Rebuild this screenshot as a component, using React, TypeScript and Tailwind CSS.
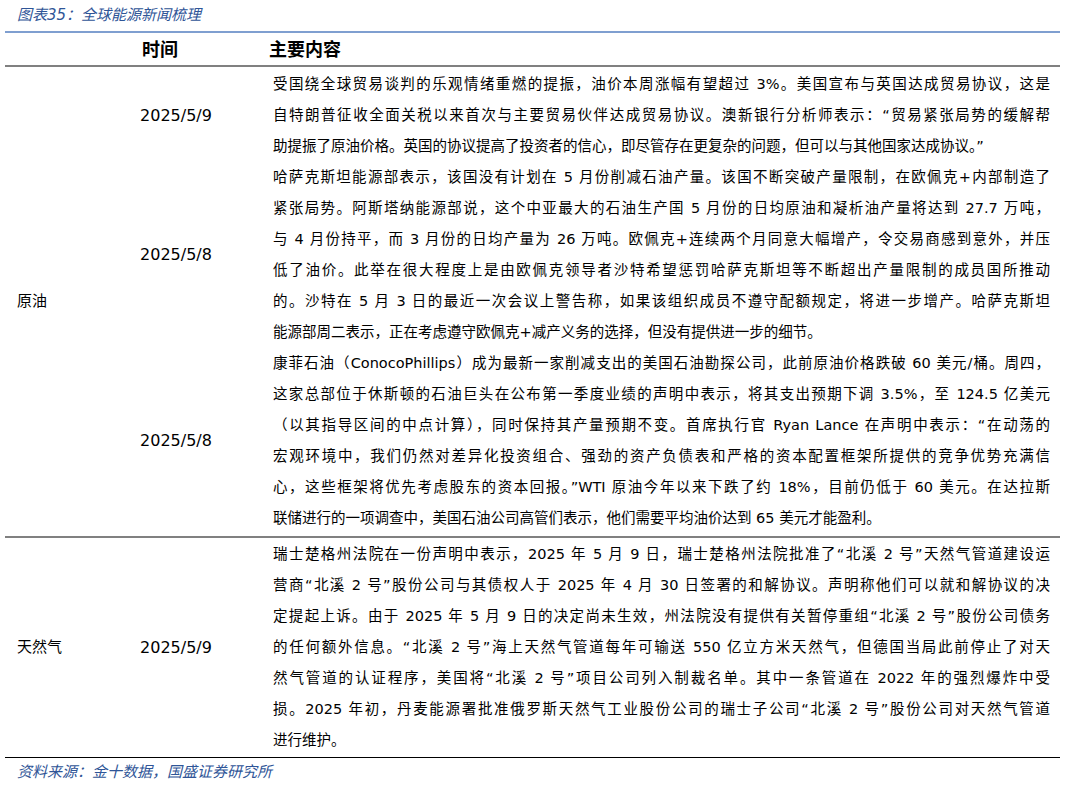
import React from "react";

const FONT = { fontFamily: '"DejaVu Sans", "Noto Sans CJK SC", sans-serif' };

const rows: { cat?: string; date: string; lines: string[] }[][] = [
  [
    {
      cat: "原油",
      date: "2025/5/9",
      lines: [
        "受国绕全球贸易谈判的乐观情绪重燃的提振，油价本周涨幅有望超过 3%。美国宣布与英国达成贸易协议，这是",
        "自特朗普征收全面关税以来首次与主要贸易伙伴达成贸易协议。澳新银行分析师表示：“贸易紧张局势的缓解帮",
        "助提振了原油价格。英国的协议提高了投资者的信心，即尽管存在更复杂的问题，但可以与其他国家达成协议。”",
      ],
    },
    {
      date: "2025/5/8",
      lines: [
        "哈萨克斯坦能源部表示，该国没有计划在 5 月份削减石油产量。该国不断突破产量限制，在欧佩克+内部制造了",
        "紧张局势。阿斯塔纳能源部说，这个中亚最大的石油生产国 5 月份的日均原油和凝析油产量将达到 27.7 万吨，",
        "与 4 月份持平，而 3 月份的日均产量为 26 万吨。欧佩克+连续两个月同意大幅增产，令交易商感到意外，并压",
        "低了油价。此举在很大程度上是由欧佩克领导者沙特希望惩罚哈萨克斯坦等不断超出产量限制的成员国所推动",
        "的。沙特在 5 月 3 日的最近一次会议上警告称，如果该组织成员不遵守配额规定，将进一步增产。哈萨克斯坦",
        "能源部周二表示，正在考虑遵守欧佩克+减产义务的选择，但没有提供进一步的细节。",
      ],
    },
    {
      date: "2025/5/8",
      lines: [
        "康菲石油（ConocoPhillips）成为最新一家削减支出的美国石油勘探公司，此前原油价格跌破 60 美元/桶。周四，",
        "这家总部位于休斯顿的石油巨头在公布第一季度业绩的声明中表示，将其支出预期下调 3.5%，至 124.5 亿美元",
        "（以其指导区间的中点计算），同时保持其产量预期不变。首席执行官 Ryan Lance 在声明中表示：“在动荡的",
        "宏观环境中，我们仍然对差异化投资组合、强劲的资产负债表和严格的资本配置框架所提供的竞争优势充满信",
        "心，这些框架将优先考虑股东的资本回报。”WTI 原油今年以来下跌了约 18%，目前仍低于 60 美元。在达拉斯",
        "联储进行的一项调查中，美国石油公司高管们表示，他们需要平均油价达到 65 美元才能盈利。",
      ],
    },
  ],
  [
    {
      cat: "天然气",
      date: "2025/5/9",
      lines: [
        "瑞士楚格州法院在一份声明中表示，2025 年 5 月 9 日，瑞士楚格州法院批准了“北溪 2 号”天然气管道建设运",
        "营商“北溪 2 号”股份公司与其债权人于 2025 年 4 月 30 日签署的和解协议。声明称他们可以就和解协议的决",
        "定提起上诉。由于 2025 年 5 月 9 日的决定尚未生效，州法院没有提供有关暂停重组“北溪 2 号”股份公司债务",
        "的任何额外信息。“北溪 2 号”海上天然气管道每年可输送 550 亿立方米天然气，但德国当局此前停止了对天",
        "然气管道的认证程序，美国将“北溪 2 号”项目公司列入制裁名单。其中一条管道在 2022 年的强烈爆炸中受",
        "损。2025 年初，丹麦能源署批准俄罗斯天然气工业股份公司的瑞士子公司“北溪 2 号”股份公司对天然气管道",
        "进行维护。",
      ],
    },
  ],
];

function Section({ items }: { items: (typeof rows)[number] }) {
  const cat = items[0].cat;
  return (
    <div className="flex">
      <div className="w-[120px] pl-3 flex items-center text-[15px] text-black">{cat}</div>
      <div className="flex-1 flex flex-col">
        {items.map((it, i) => (
          <div key={i} className="flex">
            <div className="w-[102px] flex items-center justify-center text-[16px]">{it.date}</div>
            <div className="flex-1 pl-[46px] pr-[10px]">
              {it.lines.map((l, j) => (
                <div
                  key={j}
                  className={
                    "h-[31px] leading-[31px] text-[14.5px] text-justify " +
                    (j < it.lines.length - 1 ? "[text-align-last:justify]" : "")
                  }
                >
                  {l}
                </div>
              ))}
            </div>
          </div>
        ))}
      </div>
    </div>
  );
}

export default function App() {
  return (
    <div className="w-[1065px] h-[789px] bg-white text-black" style={FONT}>
      <div className="px-[5px]">
        <div className="h-[31px] pl-3 flex items-center italic text-[15px] text-[#2f5597]">图表35：全球能源新闻梳理</div>
        <div className="border-t-2 border-[#7f9fd0] border-b-2 border-b-[#808080] h-[36px] flex items-center font-bold text-[18px]">
          <div className="w-[120px]" />
          <div className="w-[102px] pl-[17px]">时间</div>
          <div className="pl-[42px]">主要内容</div>
        </div>
        <div className="pt-[2px] pb-[2px] border-b-2 border-[#808080]">
          <Section items={rows[0]} />
        </div>
        <div className="pt-[1px] pb-[1px] border-b border-black">
          <Section items={rows[1]} />
        </div>
        <div className="h-[28px] pl-3 flex items-center italic text-[15px] text-[#2f5597]">资料来源：金十数据，国盛证券研究所</div>
      </div>
    </div>
  );
}
